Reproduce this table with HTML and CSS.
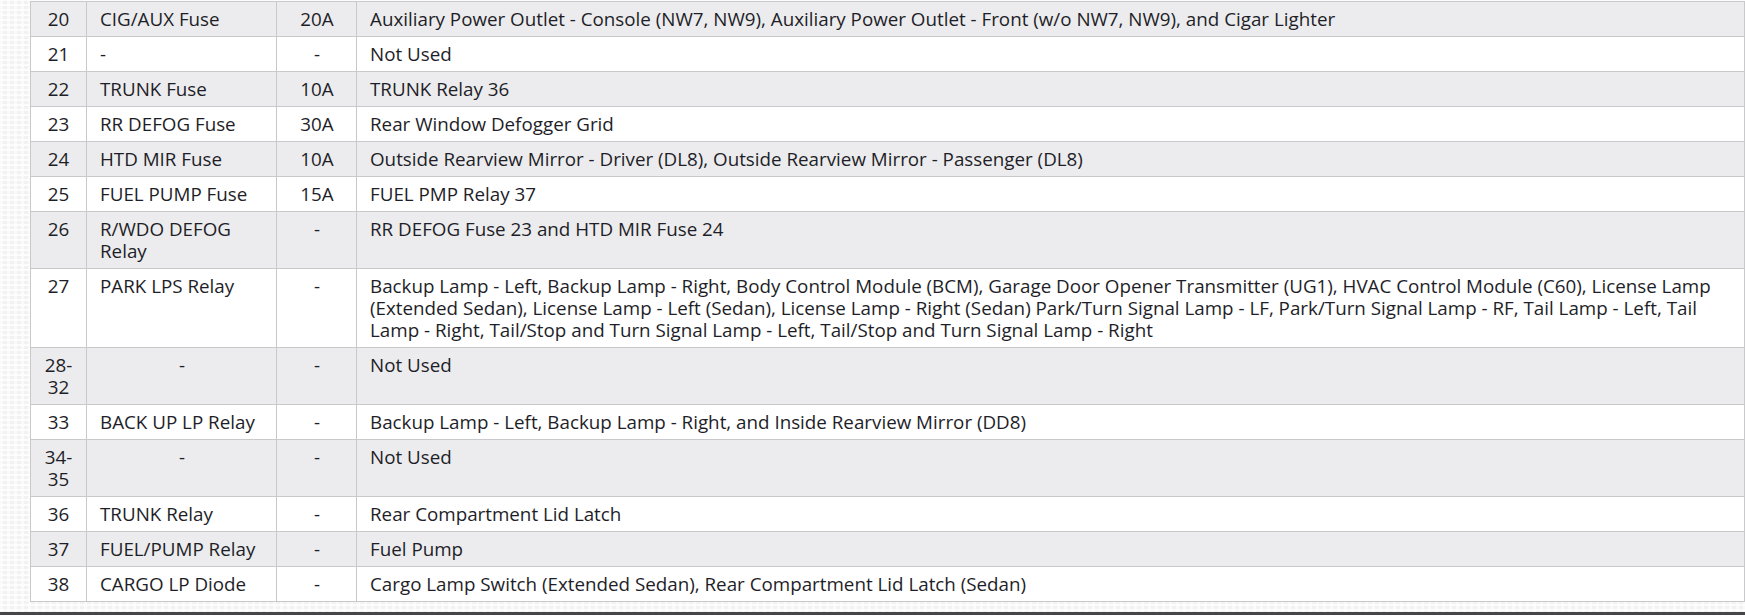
FILE: index.html
```html
<!DOCTYPE html>
<html>
<head>
<meta charset="utf-8">
<link rel="stylesheet" href="styles.css">
</head>
<body>
<div class="page">
<table class="fuses">
<colgroup><col class="c-no"><col class="c-name"><col class="c-amp"><col class="c-desc"></colgroup>
<tbody>
<tr><td class="no">20</td><td>CIG/AUX Fuse</td><td class="amp">20A</td><td>Auxiliary Power Outlet - Console (NW7, NW9), Auxiliary Power Outlet - Front (w/o NW7, NW9), and Cigar Lighter</td></tr>
<tr><td class="no">21</td><td>-</td><td class="amp">-</td><td>Not Used</td></tr>
<tr><td class="no">22</td><td>TRUNK Fuse</td><td class="amp">10A</td><td>TRUNK Relay 36</td></tr>
<tr><td class="no">23</td><td>RR DEFOG Fuse</td><td class="amp">30A</td><td>Rear Window Defogger Grid</td></tr>
<tr><td class="no">24</td><td>HTD MIR Fuse</td><td class="amp">10A</td><td>Outside Rearview Mirror - Driver (DL8), Outside Rearview Mirror - Passenger (DL8)</td></tr>
<tr><td class="no">25</td><td>FUEL PUMP Fuse</td><td class="amp">15A</td><td>FUEL PMP Relay 37</td></tr>
<tr><td class="no">26</td><td>R/WDO DEFOG Relay</td><td class="amp">-</td><td>RR DEFOG Fuse 23 and HTD MIR Fuse 24</td></tr>
<tr><td class="no">27</td><td>PARK LPS Relay</td><td class="amp">-</td><td>Backup Lamp - Left, Backup Lamp - Right, Body Control Module (BCM), Garage Door Opener Transmitter (UG1), HVAC Control Module (C60), License Lamp (Extended Sedan), License Lamp - Left (Sedan), License Lamp - Right (Sedan) Park/Turn Signal Lamp - LF, Park/Turn Signal Lamp - RF, Tail Lamp - Left, Tail Lamp - Right, Tail/Stop and Turn Signal Lamp - Left, Tail/Stop and Turn Signal Lamp - Right</td></tr>
<tr><td class="no">28-32</td><td class="ctr">-</td><td class="amp">-</td><td>Not Used</td></tr>
<tr><td class="no">33</td><td>BACK UP LP Relay</td><td class="amp">-</td><td>Backup Lamp - Left, Backup Lamp - Right, and Inside Rearview Mirror (DD8)</td></tr>
<tr><td class="no">34-35</td><td class="ctr">-</td><td class="amp">-</td><td>Not Used</td></tr>
<tr><td class="no">36</td><td>TRUNK Relay</td><td class="amp">-</td><td>Rear Compartment Lid Latch</td></tr>
<tr><td class="no">37</td><td>FUEL/PUMP Relay</td><td class="amp">-</td><td>Fuel Pump</td></tr>
<tr><td class="no">38</td><td>CARGO LP Diode</td><td class="amp">-</td><td>Cargo Lamp Switch (Extended Sedan), Rear Compartment Lid Latch (Sedan)</td></tr>
</tbody>
</table>
<div class="footer"></div>
</div>
</body>
</html>
```

FILE: styles.css
```css
html, body {
  margin: 0;
  padding: 0;
}
body {
  background-color: #f2f2f2;
  background-image:
    repeating-linear-gradient(0deg, rgba(255,255,255,0.75) 0 2px, transparent 2px 5px),
    repeating-linear-gradient(90deg, rgba(255,255,255,0.6) 0 3px, transparent 3px 7px);
  font-family: "Open Sans", "Noto Sans", sans-serif;
  color: #1e1e28;
}
.page {
  width: 1745px;
  height: 616px;
  overflow: hidden;
  padding-top: 1px;
  box-sizing: border-box;
}
.fuses {
  margin: 0 0 0 30px;
  width: 1715px;
  border-collapse: collapse;
  table-layout: fixed;
  font-size: 18.8px;
  line-height: 22px;
}
.c-no { width: 56px; }
.c-name { width: 190px; }
.c-amp { width: 80px; }
.fuses td {
  border: 1px solid #c9c9cb;
  padding: 6px 12px 6px 13px;
  height: 22px;
  vertical-align: top;
  background: #ffffff;
}
.fuses tr:nth-child(odd) td {
  background: #ececee;
}
.fuses td.no {
  text-align: center;
  padding-left: 12px;
  padding-right: 12px;
}
.fuses td.amp, .fuses td.ctr {
  text-align: center;
}
.footer {
  margin-top: 10px;
  border-top: 3px solid #45454a;
}
```
